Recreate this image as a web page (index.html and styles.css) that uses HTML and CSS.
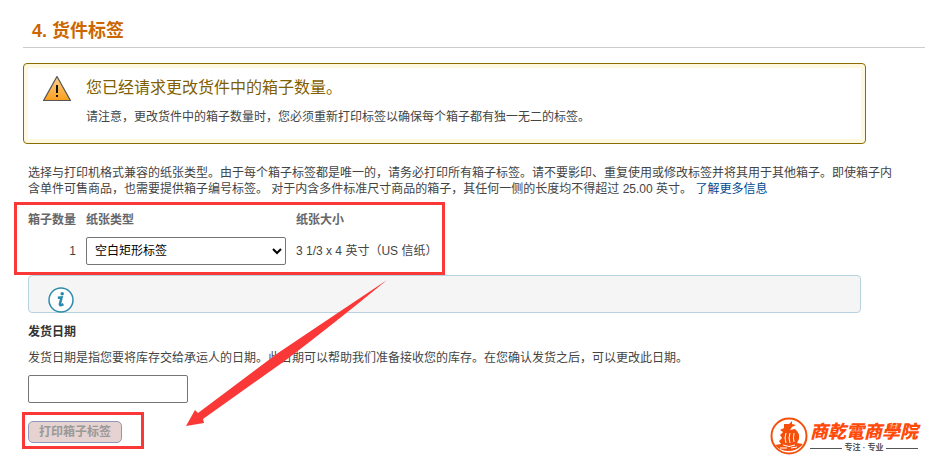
FILE: index.html
```html
<!DOCTYPE html>
<html lang="zh-CN">
<head>
  <meta charset="UTF-8" />
  <meta name="viewport" content="width=device-width, initial-scale=1.0"/>
  <title>货件标签</title>
  <link rel="stylesheet" href="styles.css">
</head>
<body>

  <main class="page">
    <h1 class="page-title">4. 货件标签</h1>

    <!-- Warning -->
    <section class="alert">
      <svg class="alert-icon" width="28" height="26" viewBox="0 0 28 26" aria-hidden="true">
        <defs>
          <linearGradient id="amber" x1="0" y1="0" x2="0" y2="1">
            <stop offset="0" stop-color="#fdd08a"/>
            <stop offset="1" stop-color="#fb9f1c"/>
          </linearGradient>
        </defs>
        <path d="M14 0.5 L27.4 24.5 H0.6 Z" fill="url(#amber)" stroke="#555" stroke-width="1.2"/>
        <path d="M13 9h2v8h-2zM13 19h2v2h-2z" fill="#111"/>
      </svg>
      <div>
        <h2 class="alert-title">您已经请求更改货件中的箱子数量。</h2>
        <p class="alert-text">请注意，更改货件中的箱子数量时，您必须重新打印标签以确保每个箱子都有独一无二的标签。</p>
      </div>
    </section>

    <div class="content">
      <p class="intro">选择与打印机格式兼容的纸张类型。由于每个箱子标签都是唯一的，请务必打印所有箱子标签。请不要影印、重复使用或修改标签并将其用于其他箱子。即使箱子内含单件可售商品，也需要提供箱子编号标签。 对于内含多件标准尺寸商品的箱子，其任何一侧的长度均不得超过 25.00 英寸。 <a href="#more">了解更多信息</a></p>

      <!-- Label options -->
      <div class="label-options">
        <table class="label-table">
          <thead>
            <tr>
              <th>箱子数量</th>
              <th id="paper-type">纸张类型</th>
              <th>纸张大小</th>
            </tr>
          </thead>
          <tbody>
            <tr>
              <td class="count">1</td>
              <td>
                <select class="paper-select" aria-labelledby="paper-type">
                  <option>空白矩形标签</option>
                </select>
              </td>
              <td>3 1/3 x 4 英寸（US 信纸）</td>
            </tr>
          </tbody>
        </table>
        <span class="mark mark-table"></span>
      </div>

      <!-- Info bar -->
      <div class="info">
        <svg width="26" height="26" viewBox="0 0 26 26" aria-hidden="true">
          <circle cx="13" cy="13" r="12" fill="#fff" stroke="#2d8bad" stroke-width="1.5"/>
          <circle cx="14.2" cy="6.8" r="1.8" fill="#2d8bad"/>
          <path d="M9.8 10.8 L13.6 10.5 L11.9 17 Q11.6 19.4 15.4 17.2" fill="none" stroke="#2d8bad" stroke-width="2.5"/>
        </svg>
        <svg class="arrow" width="202" height="148" viewBox="0 0 202 148" aria-hidden="true">
          <path d="M201 0 Q150 42 100 80 L17 139 L18 143 L0 146 L9 130 L12 133 L92 73 Q150 34 201 0 Z"/>
        </svg>
      </div>

      <!-- Ship date -->
      <form class="ship-form">
        <label class="ship-label" for="ship-date">发货日期</label>
        <p class="ship-text">发货日期是指您要将库存交给承运人的日期。此日期可以帮助我们准备接收您的库存。在您确认发货之后，可以更改此日期。</p>
        <input class="ship-date" type="text" id="ship-date" name="ship-date">
        <div class="actions">
          <div class="print">
            <button class="print-button" type="submit" disabled>打印箱子标签</button>
            <span class="mark mark-button"></span>
          </div>
          <div class="brand">
            <svg width="38" height="38" viewBox="0 0 38 38" aria-hidden="true">
              <circle cx="19" cy="19" r="17.5" fill="#fff" stroke="#f4500c" stroke-width="2"/>
              <path d="M14 7 L19 7 L22 4 L22 7 L26 8 L22 10 L20 13 L25 12 Q30 16 29 22 L27 26 L33 27 L30 30 Q25 34 19 34 Q10 34 5 28 L11 27 L9 24 L12 21 L10 18 L13 15 L10 13 L14 11 Z" fill="#f4500c"/>
              <path d="M16 16q-2 5 0 10M20 16q-2 5 0 10M24 16q-1 5 0 9M13 28q6 3 12 0M10 31l7 0M21 31l6 -1" fill="none" stroke="#fff" stroke-width="1"/>
            </svg>
            <div class="brand-text">
              <strong class="brand-name">商乾電商學院</strong>
              <small class="brand-motto">专注 · 专业</small>
            </div>
          </div>
        </div>
      </form>
    </div>
  </main>

</body>
</html>
```

FILE: styles.css
```css
* {
  box-sizing: border-box;
}
body {
  margin: 0;
  background: white;
  color: #444;
  font-family: "Liberation Sans", "Noto Sans CJK SC", sans-serif;
  font-size: 12px;
  line-height: 16px;
}
h1,
h2,
p {
  margin: 0;
}

a {
  color: #004b91;
  text-decoration: none;
}

.page {
  padding: 16px 0 0 23px;
}

.page-title {
  padding: 0 9px;
  border-bottom: 1px solid #ccc;
  color: #cc6600;
  font-size: 18px;
  line-height: 31px;
}

/* Warning */
.alert {
  display: flex;
  gap: 15px;
  margin: 15px 59px 0 0;
  padding: 12px 19px 18px;
  border: 1px solid #8a6d00;
  border-radius: 4px;
  box-shadow: inset 0 0 0 4px #fff8e1;
}

.alert-title {
  color: #7f5f00;
  font-size: 16px;
  font-weight: normal;
  line-height: 24px;
}

.alert-text {
  margin-top: 9px;
}

/* Label options */
.content {
  padding-left: 5px;
}

.intro {
  margin: 21px 32px 0 0;
}

.label-options {
  position: relative;
  width: fit-content;
  padding: 10px 0;
}

.label-table {
  border-collapse: collapse;
}

.label-table th,
.label-table td {
  padding: 0 10px 0 0;
  text-align: left;
}

.label-table th {
  padding-top: 5px;
  padding-bottom: 9px;
  color: #666;
}

.label-table .count {
  text-align: right;
}

.paper-select {
  display: block;
  width: 200px;
  height: 28px;
  padding: 0 4px;
  border: 1px solid #767676;
  border-radius: 2px;
  background: white;
  color: black;
  font: inherit;
}

/* Red marks */
.mark {
  position: absolute;
  border: 3px solid #fb3838;
}

.mark-table {
  inset: 5px 2px 0 -14px;
}

.mark-button {
  inset: -9px -22px -6px -6px;
}

.arrow {
  position: absolute;
  top: 4px;
  left: 157px;
  fill: #fb3838;
}

/* Info bar */
.info {
  position: relative;
  height: 38px;
  margin-right: 64px;
  padding: 11px 19px 0;
  border: 1px solid #b8d3e0;
  border-radius: 4px;
  background: #f5f5f5;
}

/* Ship date */
.ship-label {
  display: block;
  margin-top: 11px;
  color: #333;
  font-weight: bold;
}

.ship-text {
  margin-top: 10px;
}

.ship-date {
  display: block;
  width: 160px;
  height: 28px;
  margin-top: 9px;
  border: 1px solid #767676;
  border-radius: 2px;
}

.actions {
  display: flex;
  justify-content: space-between;
  margin-top: 14px;
  padding-right: 7px;
}

.print {
  position: relative;
  margin-top: 4px;
  height: 22px;
}

.print-button {
  height: 22px;
  padding: 0 10px;
  border: 1px solid #8f96b8;
  border-radius: 5px;
  background: #e6d2d0;
  color: #999;
  font: inherit;
  font-weight: bold;
}

.brand {
  display: flex;
  gap: 2px;
}

.brand-text {
  display: flex;
  flex-direction: column;
}

.brand-name {
  color: #ff4a08;
  font-family: "Noto Sans CJK TC", sans-serif;
  font-size: 18px;
  font-style: italic;
  font-weight: 900;
  line-height: 26px;
}

.brand-motto {
  display: flex;
  align-items: center;
  gap: 2px;
  color: #555;
  font-size: 8px;
  font-weight: bold;
  line-height: 10px;
}

.brand-motto::before,
.brand-motto::after {
  content: "";
  flex: 1;
  height: 1px;
  background: #555;
}
```
